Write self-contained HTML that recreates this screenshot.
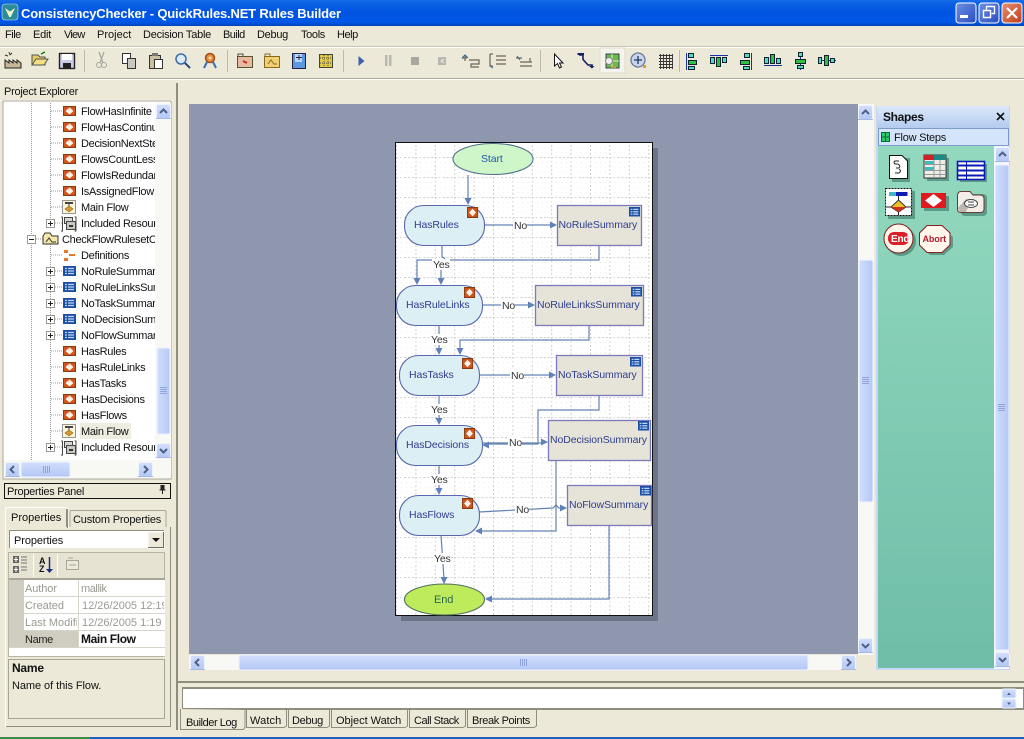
<!DOCTYPE html>
<html><head><meta charset="utf-8"><title>ConsistencyChecker - QuickRules.NET Rules Builder</title>
<style>
html,body{margin:0;padding:0;width:1024px;height:739px;overflow:hidden;background:#ECE9D8}
svg{display:block;position:absolute;left:0;top:0}
text{font-family:"Liberation Sans",sans-serif;font-size:11px;fill:#111;dominant-baseline:auto;letter-spacing:-.3px}
.g{fill:#9a9a92;letter-spacing:0}
.d{fill:#2f3d8f;font-size:10.5px;letter-spacing:-.1px}
.l{fill:#333;font-size:10.5px;letter-spacing:-.2px}
.b{font-weight:bold}
</style></head><body>
<svg width="1024" height="739" viewBox="0 0 1024 739" xmlns="http://www.w3.org/2000/svg">
<defs>
<linearGradient id="tb" x1="0" y1="0" x2="0" y2="1"><stop offset="0" stop-color="#1A6BEA"/><stop offset=".12" stop-color="#0A62E4"/><stop offset=".5" stop-color="#0053E0"/><stop offset=".85" stop-color="#0058E8"/><stop offset="1" stop-color="#0044B8"/></linearGradient>
<linearGradient id="sb" x1="0" y1="0" x2="1" y2="0"><stop offset="0" stop-color="#D2DEFC"/><stop offset="1" stop-color="#B4C8F6"/></linearGradient>
<linearGradient id="sh" x1="0" y1="0" x2="0" y2="1"><stop offset="0" stop-color="#D2DEFC"/><stop offset="1" stop-color="#B4C8F6"/></linearGradient>
<linearGradient id="teal" x1="0" y1="0" x2="0" y2="1"><stop offset="0" stop-color="#93D9BF"/><stop offset="1" stop-color="#6FBDA8"/></linearGradient>
<linearGradient id="hdr" x1="0" y1="0" x2="0" y2="1"><stop offset="0" stop-color="#DCE8FA"/><stop offset="1" stop-color="#B4CCF0"/></linearGradient>
<linearGradient id="btnb" x1="0" y1="0" x2="1" y2="1"><stop offset="0" stop-color="#6E90E4"/><stop offset="1" stop-color="#2A4CC0"/></linearGradient>
<linearGradient id="btnr" x1="0" y1="0" x2="1" y2="1"><stop offset="0" stop-color="#E89078"/><stop offset="1" stop-color="#C03C14"/></linearGradient>
<pattern id="grid" x="396" y="137" width="19.4" height="20" patternUnits="userSpaceOnUse">
<path d="M.5 0V20" stroke="#d0d0d0" stroke-width="1" stroke-dasharray="2 2" fill="none"/>
<path d="M0 .5H19.4" stroke="#d0d0d0" stroke-width="1" stroke-dasharray="2 2" fill="none"/>
<path d="M5.5 0V20M10.5 0V20M15.5 0V20" stroke="#eeeeee" stroke-width="1" stroke-dasharray="1 4" fill="none"/>
<path d="M0 5.5H19.4M0 10.5H19.4M0 15.5H19.4" stroke="#eeeeee" stroke-width="1" stroke-dasharray="1 4" fill="none"/>
</pattern>
<clipPath id="treeclip"><rect x="4" y="103" width="151" height="357"/></clipPath>
<clipPath id="c1"><rect x="23" y="580" width="54" height="70"/></clipPath>
<clipPath id="c2"><rect x="80" y="580" width="84" height="70"/></clipPath>
<g id="rule"><rect x="0" y="0" width="13" height="10" fill="#D0561E"/><rect x=".5" y=".5" width="12" height="9" fill="none" stroke="#8a3a10"/><path d="M6.5 1.5L10.5 5L6.5 8.5L2.5 5Z" fill="#FFF4E8"/></g>
<g id="tbl"><rect x="0" y="0" width="13" height="10" fill="#1C4FA8"/><path d="M2 2.5H11M2 5H11M2 7.5H11" stroke="#BBD8F8" stroke-width="1.2"/><path d="M4.5 1.5V9" stroke="#1C4FA8"/></g>
<g id="flow"><rect x=".5" y=".5" width="13" height="13" fill="#FBF6D8" stroke="#333" stroke-dasharray="1 1"/><rect x="3" y="2" width="8" height="2" fill="#444"/><path d="M7 4V6" stroke="#444"/><path d="M7 6L11 9L7 12L3 9Z" fill="#D89838" stroke="#8a6020" stroke-width=".6"/></g>
<g id="inc"><path d="M1.5 1V15H0M1.5 1H0M13.5 1H15V15H13.5" stroke="#444" fill="none"/><rect x="3.5" y="1.5" width="8" height="6" fill="#D8D8D0" stroke="#444"/><rect x="5.5" y="5.5" width="9" height="8" fill="#C8C8C0" stroke="#444"/><path d="M8 10H12" stroke="#333" stroke-width="2"/></g>
<g id="plus"><rect x=".5" y=".5" width="8" height="8" fill="#fff" stroke="#9a9a90"/><path d="M2 4.5H7M4.5 2V7" stroke="#222"/></g>
<g id="minus"><rect x=".5" y=".5" width="8" height="8" fill="#fff" stroke="#9a9a90"/><path d="M2 4.5H7" stroke="#222"/></g>
<g id="btn"><rect x=".5" y=".5" width="14" height="14" rx="2" fill="url(#sh)" stroke="#EEF3FE"/><rect x="0" y="14" width="15" height="1" fill="#A6B8DE"/></g>
<g id="up"><use href="#btn"/><path d="M4 9L7.5 5.5L11 9" fill="none" stroke="#4D6185" stroke-width="2"/></g>
<g id="dn"><use href="#btn"/><path d="M4 6L7.5 9.5L11 6" fill="none" stroke="#4D6185" stroke-width="2"/></g>
<g id="lf"><use href="#btn"/><path d="M9 4L5.5 7.5L9 11" fill="none" stroke="#4D6185" stroke-width="2"/></g>
<g id="rt"><use href="#btn"/><path d="M6 4L9.5 7.5L6 11" fill="none" stroke="#4D6185" stroke-width="2"/></g>
<g id="grip"><path d="M0 .5H7M0 2.5H7M0 4.5H7M0 6.5H7" stroke="#8EA4DA"/></g>
</defs>

<!-- title bar -->
<rect x="0" y="0" width="1024" height="26" fill="url(#tb)"/>
<rect x="2" y="4" width="16" height="16" rx="3" fill="#2C8C9C" stroke="#D8E8E0" stroke-width=".6"/>
<path d="M5 8L10 11.500L15 8L10.800 17H9.200Z" fill="#F0F4C8"/>
<text x="21" y="18" textLength="320" class="b" style="font-size:13px;fill:#fff;letter-spacing:0">ConsistencyChecker - QuickRules.NET Rules Builder</text>
<rect x="956" y="3" width="20" height="20" rx="3" fill="url(#btnb)" stroke="#fff"/><rect x="960" y="15" width="8" height="3" fill="#fff"/>
<rect x="979" y="3" width="20" height="20" rx="3" fill="url(#btnb)" stroke="#fff"/><path d="M986.500 9.500V6.500H994.500V13.500H991.500M983.500 10.500H990.500V17.500H983.500Z" fill="none" stroke="#fff" stroke-width="1.400"/>
<rect x="1002" y="3" width="20" height="20" rx="3" fill="url(#btnr)" stroke="#fff"/><path d="M1007 8L1017 18M1017 8L1007 18" stroke="#fff" stroke-width="2.200"/>

<!-- menu -->
<g>
<text x="5" y="38" textLength="16">File</text><text x="33" y="38" textLength="18">Edit</text><text x="64" y="38" textLength="21">View</text><text x="97" y="38" textLength="34">Project</text><text x="143" y="38" textLength="68">Decision Table</text><text x="223" y="38" textLength="22">Build</text><text x="257" y="38" textLength="31">Debug</text><text x="301" y="38" textLength="24">Tools</text><text x="337" y="38" textLength="21">Help</text>
</g>
<rect x="0" y="46" width="1024" height="1" fill="#C8C5B2"/><rect x="0" y="47" width="1024" height="1" fill="#fff"/>
<rect x="0" y="78" width="1024" height="1" fill="#ACA899"/><rect x="0" y="79" width="1024" height="1" fill="#fff"/>

<!-- toolbar separators -->
<path d="M84.500 50V72M227.500 50V72M343.500 50V72M540.500 50V72M679.500 50V72" stroke="#BDBAA8"/>
<!-- new project -->
<path d="M5 68V60L9 63V60L13 63V60L17 63V60L21 63V68Z" fill="#C8B898" stroke="#222"/><path d="M9 52L10 55M5 55L8 56M12 53L10 55" stroke="#333"/>
<!-- open -->
<path d="M32 65V55H38L40 57H45V65Z" fill="#E8C860" stroke="#555"/><path d="M32 65L36 59H48L44 65Z" fill="#F4E080" stroke="#555"/><path d="M41 54L45 52" stroke="#080" stroke-width="1.500"/>
<!-- save -->
<rect x="59.500" y="53.500" width="15" height="15" fill="#C8CCE8" stroke="#222" stroke-width="1.400"/><rect x="62" y="54" width="10" height="6" fill="#fff"/><rect x="63" y="63" width="8" height="5" fill="#222"/>
<!-- cut -->
<path d="M99 52L103 63M104 52L100 63" stroke="#A8A8A0" stroke-width="1.300"/><circle cx="99" cy="65" r="2.500" fill="none" stroke="#A8A8A0"/><circle cx="104" cy="65" r="2.500" fill="none" stroke="#A8A8A0"/>
<!-- copy -->
<rect x="122.500" y="53.500" width="8" height="10" fill="#fff" stroke="#333"/><rect x="127.500" y="58.500" width="8" height="10" fill="#C8C8C0" stroke="#333"/>
<!-- paste -->
<rect x="149.500" y="55.500" width="11" height="13" fill="#C8C0A0" stroke="#333"/><rect x="152" y="53" width="6" height="3" fill="#777"/><rect x="154.500" y="59.500" width="8" height="9" fill="#fff" stroke="#333"/>
<!-- find -->
<circle cx="181" cy="59" r="5" fill="#DCEBFA" stroke="#3A6EA8" stroke-width="1.500"/><path d="M185 63L190 68" stroke="#2A4A78" stroke-width="2"/>
<!-- award -->
<circle cx="210" cy="58" r="4.500" fill="#E88C40" stroke="#A04C18" stroke-width="1.500"/><circle cx="210" cy="58" r="1.500" fill="#F0E0B0"/><path d="M207 62L204 68M213 62L216 68" stroke="#3E6EB8" stroke-width="2"/>
<!-- folders -->
<rect x="237.500" y="56.500" width="15" height="11" fill="#E8B8A0" stroke="#553"/><path d="M238 56V54H243V56" fill="none" stroke="#553"/><path d="M243 61L247 63" stroke="#C03020" stroke-width="2"/>
<rect x="264.500" y="56.500" width="15" height="11" fill="#F0D070" stroke="#886A20"/><path d="M265 56V54H270V56M268 64L271 60L274 64H277" fill="none" stroke="#886A20"/>
<rect x="292.500" y="53.500" width="13" height="15" fill="#5C98E0" stroke="#224"/><path d="M295 54H302V62H295Z" fill="#BCD8F8"/><path d="M299 55V60M296 57.500H302" stroke="#224"/>
<rect x="319.500" y="54.500" width="13" height="13" fill="#E0C848" stroke="#443"/><path d="M320 58H332M320 63H332M324 55V67M328 55V67" stroke="#554" stroke-dasharray="1 1"/>
<!-- debug -->
<path d="M358.500 56V66L364.500 61Z" fill="#4060A8"/>
<path d="M385 55H387.500V66H385ZM389 55H391.500V66H389Z" fill="#B8B8B0"/>
<rect x="411" y="57" width="8" height="8" fill="#A8A8A0"/>
<rect x="438" y="57" width="8" height="8" fill="#B8B8B0"/><path d="M444 59L441 61L444 63" stroke="#eee" fill="none"/>
<path d="M462 58H467M465 55L465 61M469 60H479V64H471V67H479" fill="none" stroke="#6A6658" stroke-width="1.200"/><path d="M462 58L465 55L468 58" fill="none" stroke="#3060A0"/>
<path d="M490 54H493M490 54V66H493M496 56H506M496 60H506M496 64H506" fill="none" stroke="#6A6658" stroke-width="1.200"/><path d="M490 66L493 68" stroke="#3060A0"/>
<path d="M516 58H522M530 58V62M520 62H532M520 66H532" fill="none" stroke="#6A6658" stroke-width="1.200"/><path d="M517 56L520 60" stroke="#3060A0"/>
<!-- pointer -->
<path d="M554.500 54V66L557.500 63.500L559.500 68L561.500 67L559.500 63H563Z" fill="#fff" stroke="#111"/>
<path d="M579 55H583V59.500L588 65H592V67" fill="none" stroke="#102060" stroke-width="1.600"/><path d="M577.500 55H584V53H577.500ZM589 66L592 68.500L594.500 66Z" fill="#102060"/>
<!-- pressed -->
<rect x="600" y="48" width="25" height="25" fill="#F5F4EC" stroke="#E0DDCC"/>
<rect x="606" y="54" width="13" height="14" fill="#6CB848" stroke="#345"/><path d="M612 54V68M606 61H619" stroke="#D8F0C0"/><circle cx="609" cy="61" r="3.500" fill="#EEE" stroke="#888"/><rect x="611" y="66" width="5" height="2" fill="#C0A040"/>
<circle cx="638" cy="60" r="7" fill="#C8D4EC" stroke="#6A7A9A" stroke-width="1.300"/><path d="M634 60H642M638 56V64" stroke="#203868" stroke-width="1.300"/><rect x="643" y="65" width="3" height="3" fill="#D8A030"/>
<path d="M659 55.500H673M659 58.500H673M659 61.500H673M659 64.500H673M659 67.500H673M660.500 54V69M663.500 54V69M666.500 54V69M669.500 54V69M672.500 54V69" stroke="#333" stroke-width=".9"/>
<!-- align -->
<g fill="#55D8C0" stroke="#123">
<path d="M686.500 53V70" stroke="#1830A0" fill="none"/><rect x="688.500" y="53.500" width="5" height="4"/><rect x="688.500" y="60.500" width="8" height="4" fill="#30C040"/><rect x="688.500" y="66.500" width="6" height="3"/>
<path d="M710 55.500H728" stroke="#1830A0" fill="none"/><rect x="710.500" y="57.500" width="4" height="6"/><rect x="716.500" y="57.500" width="4" height="9" fill="#30C040"/><rect x="722.500" y="57.500" width="4" height="5"/>
<path d="M751.500 53V70" stroke="#1830A0" fill="none"/><rect x="744.500" y="53.500" width="5" height="4"/><rect x="740.500" y="60.500" width="9" height="4" fill="#30C040"/><rect x="743.500" y="66.500" width="6" height="3"/>
<path d="M764 65.500H782" stroke="#1830A0" fill="none"/><rect x="764.500" y="57.500" width="4" height="6"/><rect x="770.500" y="54.500" width="4" height="9" fill="#30C040"/><rect x="776.500" y="58.500" width="4" height="5"/>
<path d="M800.500 52V70" stroke="#1830A0" fill="none"/><rect x="798.500" y="52.500" width="4" height="4"/><rect x="795.500" y="59.500" width="10" height="4" fill="#30C040"/><rect x="797.500" y="65.500" width="6" height="3"/>
<path d="M818 60.500H836" stroke="#1830A0" fill="none"/><rect x="818.500" y="57.500" width="3" height="6"/><rect x="824.500" y="55.500" width="4" height="10" fill="#30C040"/><rect x="830.500" y="58.500" width="4" height="4"/>
</g>

<!-- left pane -->
<rect x="176" y="83" width="2" height="647" fill="#8F8D7E"/>
<text x="4" y="95" textLength="74">Project Explorer</text>
<path d="M0 100.500H173" stroke="#FFFFFF"/>
<rect x="3" y="101" width="168" height="378" fill="#fff" stroke="#A8A698"/>
<rect x="155" y="103" width="16" height="357" fill="#F8F8F4"/>
<rect x="4" y="460" width="167" height="18" fill="#F8F8F4"/>
<g clip-path="url(#treeclip)">
<path d="M31.500 103V460M50.500 103V222M50.500 244V446" stroke="#9a9a9a" stroke-dasharray="1 1"/>
<path d="M51 111H63M51 127H63M51 143H63M51 159H63M51 175H63M51 191H63M51 207H63M55 223H63M36 239H44M51 255H63M55 271H63M55 287H63M55 303H63M55 319H63M55 335H63M51 351H63M51 367H63M51 383H63M51 399H63M51 415H63M51 431H63M55 447H63" stroke="#9a9a9a" stroke-dasharray="1 1"/>
<use href="#rule" x="63" y="106"/><use href="#rule" x="63" y="122"/><use href="#rule" x="63" y="138"/><use href="#rule" x="63" y="154"/><use href="#rule" x="63" y="170"/><use href="#rule" x="63" y="186"/>
<use href="#flow" x="62" y="200"/>
<use href="#plus" x="46" y="219"/><use href="#inc" x="61" y="216"/>
<use href="#minus" x="27" y="235"/>
<path d="M43 244V236L45 233H50L52 236H58V244Z" fill="#F6E8A8" stroke="#333"/><path d="M46 242L49 238L52 242H56" fill="none" stroke="#333"/>
<rect x="64" y="250" width="4" height="3" fill="#E87828"/><rect x="64" y="258" width="4" height="3" fill="#E87828"/><rect x="69" y="254" width="6" height="2" fill="#E87828"/>
<use href="#plus" x="46" y="267"/><use href="#tbl" x="63" y="266"/>
<use href="#plus" x="46" y="283"/><use href="#tbl" x="63" y="282"/>
<use href="#plus" x="46" y="299"/><use href="#tbl" x="63" y="298"/>
<use href="#plus" x="46" y="315"/><use href="#tbl" x="63" y="314"/>
<use href="#plus" x="46" y="331"/><use href="#tbl" x="63" y="330"/>
<use href="#rule" x="63" y="346"/><use href="#rule" x="63" y="362"/><use href="#rule" x="63" y="378"/><use href="#rule" x="63" y="394"/><use href="#rule" x="63" y="410"/>
<use href="#flow" x="62" y="424"/>
<rect x="80" y="423" width="51" height="16" fill="#EFEDE0"/>
<use href="#plus" x="46" y="443"/><use href="#inc" x="61" y="440"/>
<text x="81" y="115">FlowHasInfinite</text><text x="81" y="131">FlowHasContinue</text><text x="81" y="147">DecisionNextStep</text><text x="81" y="163">FlowsCountLess</text><text x="81" y="179">FlowIsRedundant</text><text x="81" y="195">IsAssignedFlow</text><text x="81" y="211">Main Flow</text><text x="81" y="227">Included Resources</text>
<text x="62" y="243">CheckFlowRulesetConsistency</text><text x="81" y="259">Definitions</text><text x="81" y="275">NoRuleSummary</text><text x="81" y="291">NoRuleLinksSummary</text><text x="81" y="307">NoTaskSummary</text><text x="81" y="323">NoDecisionSummary</text><text x="81" y="339">NoFlowSummary</text>
<text x="81" y="355">HasRules</text><text x="81" y="371">HasRuleLinks</text><text x="81" y="387">HasTasks</text><text x="81" y="403">HasDecisions</text><text x="81" y="419">HasFlows</text><text x="81" y="435">Main Flow</text><text x="81" y="451">Included Resources</text>
</g>
<use href="#up" x="156" y="104"/>
<rect x="157" y="348" width="13" height="86" rx="2" fill="url(#sb)" stroke="#EEF3FE"/><use href="#grip" x="160" y="387"/>
<use href="#dn" x="156" y="443"/>
<use href="#lf" x="5" y="462"/>
<rect x="21" y="462" width="49" height="15" rx="2" fill="url(#sh)" stroke="#EEF3FE"/><path d="M43.500 466V473M45.500 466V473M47.500 466V473M49.500 466V473" stroke="#8EA4DA"/>
<use href="#rt" x="138" y="462"/>

<!-- properties panel -->
<rect x="4.500" y="483.500" width="166" height="15" fill="#ECE9D8" stroke="#111"/>
<text x="7" y="495" textLength="77">Properties Panel</text>
<path d="M159.500 490H165.500M161 485.500H164V490H161ZM162.500 490V494" stroke="#222" fill="#222"/>
<path d="M5 527.500H68M170.500 527V726.500H5" fill="none" stroke="#8F8D7E"/>
<path d="M5.500 527V727" stroke="#fff"/>
<path d="M5.500 527V509.500Q5.500 507.500 7.500 507.500H66.500Q68 507.500 68 509.500V528" fill="#ECE9D8" stroke="#fff"/>
<rect x="66" y="509" width="2" height="19" fill="#8F8D7E"/>
<rect x="6" y="527" width="61" height="2" fill="#ECE9D8"/>
<path d="M70 527V511.500Q70 510.500 71 510.500H164.500Q166 510.500 166 512V527" fill="#ECE9D8" stroke="#A8A698"/>
<text x="11" y="521" textLength="50">Properties</text>
<text x="73" y="523" textLength="88">Custom Properties</text>
<rect x="9" y="530" width="156" height="19" fill="#fff"/><path d="M9.500 549V530.500H164.500" fill="none" stroke="#8F8D7E"/><path d="M9 548.500H165M164.500 530V549" stroke="#ECE9D8"/>
<rect x="148" y="532" width="16" height="16" fill="#ECE9D8" stroke="#fff"/><rect x="163" y="532" width="1" height="16" fill="#716F64"/><rect x="148" y="547" width="16" height="1" fill="#716F64"/>
<path d="M152 538H160L156 542Z" fill="#111"/>
<text x="14" y="544" textLength="49">Properties</text>
<!-- prop toolbar -->
<rect x="8.500" y="552.500" width="156" height="26" fill="#E6E3D2" stroke="#B8B5A5"/>
<path d="M33.500 554V577M57.500 554V577" stroke="#fff"/>
<rect x="13" y="556" width="6" height="7" fill="#666"/><rect x="13" y="566" width="6" height="7" fill="#666"/><path d="M14 559.500H18M16 557V562M14 569.500H18M16 567V572" stroke="#fff"/><path d="M21 557H27M21 560H27M21 563H27M21 567H27M21 570H27" stroke="#777"/>
<text x="39" y="564" class="b" style="font-size:9px;letter-spacing:0">A</text><text x="39" y="572" class="b" style="font-size:9px;letter-spacing:0">Z</text><path d="M49.500 557V570" stroke="#14307A" stroke-width="1.500"/><path d="M46 569H53L49.500 573Z" fill="#14307A"/>
<rect x="66.500" y="560.500" width="12" height="9" fill="#ECE9D8" stroke="#A8A698"/><path d="M68 558H73M69 565H76" stroke="#A8A698"/>
<!-- grid -->
<rect x="9" y="578" width="156" height="78" fill="#fff"/>
<rect x="9" y="578" width="156" height="2" fill="#A8A698"/>
<rect x="9" y="580" width="15" height="68" fill="#CFCDC0"/>
<rect x="24" y="631" width="55" height="17" fill="#CFCDC0"/>
<path d="M24 596.500H165M24 613.500H165M24 630.500H165M9 647.500H165M78.500 580V648" stroke="#D8D6CC"/>
<path d="M8.500 578V656.500H164.500" fill="none" stroke="#B8B5A5"/>
<g clip-path="url(#c1)"><text x="25" y="592" class="g" textLength="32">Author</text><text x="25" y="609" class="g" textLength="39">Created</text><text x="25" y="626" class="g">Last Modified</text><text x="25" y="643" textLength="28" style="fill:#222">Name</text></g>
<g clip-path="url(#c2)"><text x="81" y="592" class="g" textLength="26">mallik</text><text x="82" y="609" class="g">12/26/2005 12:19 PM</text><text x="82" y="626" class="g">12/26/2005 1:19 PM</text><text x="81" y="643" class="b" textLength="55" style="font-size:12px;letter-spacing:0">Main Flow</text></g>
<rect x="8.500" y="659.500" width="156" height="59" fill="#ECE9D8" stroke="#A8A698"/>
<text x="12" y="672" class="b" textLength="32" style="font-size:12px;letter-spacing:0">Name</text>
<text x="12" y="689" textLength="89">Name of this Flow.</text>

<!-- canvas -->
<rect x="189" y="104" width="669" height="550" fill="#8E97AE"/>
<rect x="858" y="104" width="16" height="551" fill="#F8F8F4"/>
<rect x="189" y="655" width="667" height="15" fill="#F8F8F4"/>
<use href="#up" x="858" y="105"/>
<rect x="859" y="260" width="14" height="242" rx="2" fill="url(#sb)" stroke="#EEF3FE"/><use href="#grip" x="862" y="377"/>
<use href="#dn" x="858" y="638"/>
<use href="#lf" x="190" y="655"/>
<rect x="239" y="655" width="569" height="15" rx="2" fill="url(#sh)" stroke="#EEF3FE"/><path d="M520.500 659V666M522.500 659V666M524.500 659V666M526.500 659V666" stroke="#8EA4DA"/>
<use href="#rt" x="841" y="655"/>

<!-- page -->
<rect x="401" y="148" width="257" height="473" fill="#6E7488"/>
<rect x="396" y="143" width="256" height="472" fill="#fff"/>
<rect x="396" y="143" width="256" height="472" fill="url(#grid)"/>
<rect x="395.500" y="142.500" width="257" height="473" fill="none" stroke="#111"/>

<!-- connectors -->
<g fill="none" stroke="#6482B4" stroke-width="1.200">
<path d="M468 175V200"/>
<path d="M484 225H552"/>
<path d="M442 245V257Q445 258 445 260M441 263V280"/>
<path d="M599 245V260H417V280"/>
<path d="M482 305H530"/>
<path d="M439 325V350"/>
<path d="M589 325V340H460V350"/>
<path d="M479 375H551"/>
<path d="M439 395V420"/>
<path d="M599 395V410H538V444H487"/>
<path d="M482 443H543"/>
<path d="M439 465V490"/>
<path d="M556 460V531H480"/>
<path d="M479 512L553 508L556 505L559 508H562"/>
<path d="M441 535L444 579"/>
<path d="M609 525V599H490"/>
</g>
<g fill="#5F80B8">
<path d="M468 205L464.500 198H471.500Z"/><path d="M557 225L550 221.500V228.500Z"/><path d="M441 285L437.500 278H444.500Z"/><path d="M417 285L413.500 278H420.500Z"/>
<path d="M535 305L528 301.500V308.500Z"/><path d="M439 355L435.500 348H442.500Z"/><path d="M460 355L456.500 348H463.500Z"/><path d="M556 375L549 371.500V378.500Z"/>
<path d="M439 425L435.500 418H442.500Z"/><path d="M482 445L489 441.500V448.500Z"/><path d="M548 442L541 438.500V445.500Z"/><path d="M439 495L435.500 488H442.500Z"/>
<path d="M475 531L482 527.500V534.500Z"/><path d="M567 508L560 504.500V511.500Z"/><path d="M444 584L440.500 577H447.500Z"/><path d="M485 599L492 595.500V602.500Z"/>
</g>
<!-- labels -->
<g fill="#fff">
<rect x="513" y="219" width="14" height="12"/><rect x="501" y="299" width="14" height="12"/><rect x="510" y="369" width="14" height="12"/><rect x="508" y="436" width="14" height="12"/><rect x="515" y="503" width="14" height="12"/>
<rect x="432" y="259" width="18" height="11"/><rect x="430" y="334" width="18" height="11"/><rect x="430" y="404" width="18" height="11"/><rect x="430" y="474" width="18" height="11"/><rect x="433" y="553" width="18" height="11"/>
</g>
<text x="514" y="229" class="l">No</text><text x="502" y="309" class="l">No</text><text x="511" y="379" class="l">No</text><text x="509" y="446" class="l">No</text><text x="516" y="513" class="l">No</text>
<text x="433" y="268" class="l">Yes</text><text x="431" y="343" class="l">Yes</text><text x="431" y="413" class="l">Yes</text><text x="431" y="483" class="l">Yes</text><text x="434" y="562" class="l">Yes</text>

<!-- shapes -->
<g stroke-width="1.100">
<ellipse cx="493" cy="159" rx="40" ry="15.500" fill="#CFF6C9" stroke="#4F6F8F"/>
<rect x="404.500" y="205.500" width="80" height="40" rx="19" fill="#DCEFF4" stroke="#5A68AC"/>
<rect x="396.500" y="285.500" width="86" height="40" rx="19" fill="#DCEFF4" stroke="#5A68AC"/>
<rect x="399.500" y="355.500" width="80" height="40" rx="19" fill="#DCEFF4" stroke="#5A68AC"/>
<rect x="396.500" y="425.500" width="86" height="40" rx="19" fill="#DCEFF4" stroke="#5A68AC"/>
<rect x="399.500" y="495.500" width="80" height="40" rx="19" fill="#DCEFF4" stroke="#5A68AC"/>
<g fill="#E6E4D8" stroke="#7C7ABA" stroke-width="1.300">
<rect x="557.500" y="205.500" width="84" height="40"/>
<rect x="535.500" y="285.500" width="108" height="40"/>
<rect x="556.500" y="355.500" width="86" height="40"/>
<rect x="548.500" y="420.500" width="102" height="40"/>
<rect x="567.500" y="485.500" width="84" height="40"/>
</g>
<ellipse cx="444.500" cy="599.500" rx="40" ry="15.500" fill="#BEEB5C" stroke="#4F6F5F"/>
</g>
<use href="#rule" transform="translate(467 207) scale(.85 1.100)"/><use href="#rule" transform="translate(464 287) scale(.85 1.100)"/><use href="#rule" transform="translate(462 358) scale(.85 1.100)"/><use href="#rule" transform="translate(464 428) scale(.85 1.100)"/><use href="#rule" transform="translate(462 498) scale(.85 1.100)"/>
<use href="#tbl" transform="translate(629 207) scale(.85 .95)"/><use href="#tbl" transform="translate(631 287) scale(.85 .95)"/><use href="#tbl" transform="translate(630 357) scale(.85 .95)"/><use href="#tbl" transform="translate(638 421) scale(.85 .95)"/><use href="#tbl" transform="translate(640 486) scale(.85 .95)"/>
<text x="481" y="162" class="d" style="fill:#2458A8">Start</text>
<text x="414" y="228" class="d">HasRules</text><text x="406" y="308" class="d">HasRuleLinks</text><text x="409" y="378" class="d">HasTasks</text><text x="406" y="448" class="d">HasDecisions</text><text x="409" y="518" class="d">HasFlows</text>
<text x="558.500" y="228" class="d">NoRuleSummary</text><text x="537" y="308" class="d">NoRuleLinksSummary</text><text x="558" y="378" class="d">NoTaskSummary</text><text x="550" y="443" class="d">NoDecisionSummary</text><text x="569" y="508" class="d">NoFlowSummary</text>
<text x="434" y="603" class="d" style="fill:#2A6A4A;font-size:11px">End</text>

<!-- shapes panel -->
<rect x="876" y="106" width="134" height="564" fill="#C4D8F4"/>
<rect x="877" y="106" width="132" height="22" fill="url(#hdr)"/>
<text x="883" y="121" class="b" textLength="41" style="font-size:12px;letter-spacing:0">Shapes</text>
<path d="M997 113L1004 120M1004 113L997 120" stroke="#111" stroke-width="1.600"/>
<rect x="878.500" y="128.500" width="130" height="17" fill="#D4E4FA" stroke="#7C9CCC"/>
<rect x="881.500" y="132.500" width="8" height="9" fill="#2EC868" stroke="#0A6A3A"/><path d="M885.500 133V141M882 137H889" stroke="#0A6A3A"/>
<text x="894" y="141" textLength="52">Flow Steps</text>
<rect x="878" y="146" width="116" height="522" fill="url(#teal)"/>
<rect x="994" y="146" width="15" height="523" fill="#F2F5FC"/>
<use href="#up" x="995" y="147"/>
<rect x="995" y="165" width="14" height="485" rx="2" fill="url(#sb)" stroke="#EEF3FE"/><use href="#grip" x="998" y="404"/>
<use href="#dn" x="995" y="652"/>

<!-- palette icons -->
<rect x="892" y="158" width="18" height="24" fill="#5E9A88"/>
<path d="M889.500 155.500H902L907.500 161V178.500H889.500Z" fill="#fff" stroke="#111"/><path d="M899 161H895Q893 162 895 164H898Q901 166 899 168H896M899 169Q902 171 899 173H895" fill="none" stroke="#222"/>
<rect x="927" y="158" width="22" height="23" fill="#5E9A88"/>
<rect x="924" y="155" width="22" height="23" fill="#EEEEE8" stroke="#333"/><rect x="924" y="155" width="10" height="5" fill="#D02028"/><rect x="934" y="155" width="12" height="5" fill="#1E8A88"/><rect x="925" y="161" width="9" height="3" fill="#40B8C0"/><rect x="925" y="167" width="9" height="3" fill="#40B8C0"/><path d="M934 160V178M925 164.500H946M925 170.500H946M925 174.500H946M940 160V178" stroke="#999"/>
<rect x="960" y="164" width="27" height="18" fill="#5E9A88"/>
<rect x="957.500" y="161.500" width="27" height="18" fill="#fff" stroke="#0C1CB0" stroke-width="1.600"/><path d="M958 165.500H984M958 170.500H984M958 175.500H984" stroke="#0C1CB0" stroke-width="2"/><path d="M966.500 162V179" stroke="#0C1CB0"/>
<rect x="888" y="191" width="27" height="28" fill="#5E9A88"/>
<rect x="885.500" y="188.500" width="26" height="27" fill="#fff" stroke="#111" stroke-dasharray="2 1"/><rect x="889" y="192" width="19" height="4" fill="#40B8C8"/><rect x="896" y="192" width="11" height="4" fill="#0C1CB0"/><path d="M898.500 196V200M886 207H911M898.500 212V215" stroke="#222"/><path d="M898.500 200L906 207L898.500 212L891 207Z" fill="#E8C020" stroke="#333"/><path d="M891 207L906 207L898.500 212Z" fill="#D03020"/>
<rect x="924" y="196" width="25" height="15" fill="#5E9A88"/>
<rect x="921" y="193" width="25" height="15" fill="#E01820"/><path d="M933.500 194L942 200.500L933.500 207L925 200.500Z" fill="#fff"/>
<rect x="961" y="194" width="26" height="22" rx="4" fill="#5E9A88"/>
<path d="M957.500 196Q957.500 191.500 961 191.500H970L973 195H980Q984 195 984 199V209Q984 212.500 980 212.500H961Q957.500 212.500 957.500 209Z" fill="#F4EDE8" stroke="#6A3A38"/><path d="M958 208L966 199H972L966 212H960Z" fill="#BDB7B0"/><ellipse cx="971" cy="203.500" rx="6.500" ry="4" fill="#fff" stroke="#444"/><path d="M968 202H974M968 205H974" stroke="#444"/>
<circle cx="901" cy="241" r="15" fill="#5E9A88"/>
<circle cx="898.500" cy="238.500" r="14.500" fill="#FFF6EC" stroke="#7A2020"/><rect x="888" y="232" width="21" height="13" rx="6" fill="#D82028"/><text x="891" y="242" class="b" style="font-size:10px;fill:#fff;letter-spacing:-.2px">End</text>
<path d="M930 229H944L953 237V247L944 255H930L922 247V237Z" fill="#5E9A88"/>
<path d="M927 225.500H942L950 233V245L942 252.500H927L919.500 245V233Z" fill="#FFF6EC" stroke="#8A2020"/>
<text x="922.500" y="242" class="b" style="font-size:9px;fill:#B02030;letter-spacing:-.1px">Abort</text>

<!-- bottom -->
<rect x="178" y="681" width="846" height="2" fill="#8F8D7E"/>
<rect x="182" y="687" width="842" height="2" fill="#8F8D7E"/>
<rect x="183" y="689" width="840" height="19" fill="#fff"/>
<rect x="182" y="687" width="1" height="22" fill="#8F8D7E"/>
<rect x="1023" y="687" width="1" height="23" fill="#8F8D7E"/>
<rect x="183" y="708" width="841" height="2" fill="#8F8D7E"/>
<rect x="1002" y="689" width="14" height="9" rx="1.500" fill="url(#sh)" stroke="#EEF3FE"/><path d="M1007 695H1011L1009 692.500Z" fill="#4D6185"/>
<rect x="1002" y="699" width="14" height="9" rx="1.500" fill="url(#sh)" stroke="#EEF3FE"/><path d="M1007 702.500H1011L1009 705Z" fill="#4D6185"/>
<path d="M180.500 709V729.500H243.500L245 727V710" fill="#ECE9D8" stroke="#8F8D7E"/>
<g fill="#ECE9D8" stroke="#8F8D7E">
<path d="M246.500 710V727.500H284L286.500 726V710"/>
<path d="M288.500 710V727.500H327L329.500 726V710"/>
<path d="M331.500 710V727.500H405L407.500 726V710"/>
<path d="M409.500 710V727.500H463L465.500 726V710"/>
<path d="M467.500 710V727.500H534L536.500 726V710"/>
</g>
<text x="186" y="726" textLength="51">Builder Log</text>
<text x="250" y="724" textLength="31">Watch</text>
<text x="292" y="724" textLength="31">Debug</text>
<text x="336" y="724" textLength="65">Object Watch</text>
<text x="414" y="724" textLength="45">Call Stack</text>
<text x="472" y="724" textLength="58">Break Points</text>

<!-- taskbar sliver -->
<rect x="0" y="737" width="1024" height="2" fill="#245EB8"/>
<rect x="0" y="737" width="90" height="2" fill="#3E8A48"/>
</svg>
</body></html>
